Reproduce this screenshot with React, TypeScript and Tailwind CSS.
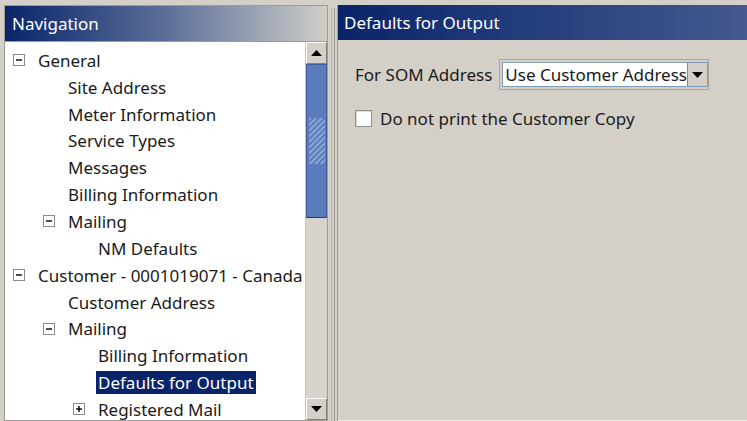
import React from 'react'

type Node = {
  label: string
  level: number
  expander?: 'minus' | 'plus'
  selected?: boolean
}

const nodes: Node[] = [
  { label: 'General', level: 0, expander: 'minus' },
  { label: 'Site Address', level: 1 },
  { label: 'Meter Information', level: 1 },
  { label: 'Service Types', level: 1 },
  { label: 'Messages', level: 1 },
  { label: 'Billing Information', level: 1 },
  { label: 'Mailing', level: 1, expander: 'minus' },
  { label: 'NM Defaults', level: 2 },
  { label: 'Customer - 0001019071 - Canada', level: 0, expander: 'minus' },
  { label: 'Customer Address', level: 1 },
  { label: 'Mailing', level: 1, expander: 'minus' },
  { label: 'Billing Information', level: 2 },
  { label: 'Defaults for Output', level: 2, selected: true },
  { label: 'Registered Mail', level: 2, expander: 'plus' },
]

const font = { fontFamily: '"Noto Sans", "Open Sans", sans-serif' }

function Expander({ kind }: { kind: 'minus' | 'plus' }) {
  return (
    <svg width="12" height="12" viewBox="0 0 12 12" className="shrink-0">
      <rect x="0.5" y="0.5" width="11" height="11" fill="#fff" stroke="#8a8a8a" />
      <path d="M3 6h6" stroke="#000" strokeWidth="1.4" />
      {kind === 'plus' && <path d="M6 3v6" stroke="#000" strokeWidth="1.4" />}
    </svg>
  )
}

function TreeRow({ node }: { node: Node }) {
  const indent = [0, 30, 60][node.level]
  return (
    <div className="flex h-[26.85px] items-center whitespace-nowrap" style={{ paddingLeft: indent }}>
      <div className="flex w-[31px] shrink-0 justify-start pl-[8px]">
        {node.expander && <Expander kind={node.expander} />}
      </div>
      <span
        className={
          node.selected
            ? 'bg-[#0a246a] px-[2px] py-[1px] text-white leading-[21px]'
            : 'px-[2px] py-[1px] text-[#1a1a1a] leading-[21px]'
        }
      >
        {node.label}
      </span>
    </div>
  )
}

function ArrowButton({ dir }: { dir: 'up' | 'down' }) {
  return (
    <div className="flex h-[22px] items-center justify-center border border-t-white border-l-white border-r-[#808080] border-b-[#808080] bg-[#d4d0c8]">
      <svg width="11" height="6" viewBox="0 0 11 6">
        {dir === 'up' ? <path d="M0 6L5.5 0L11 6z" fill="#000" /> : <path d="M0 0L5.5 6L11 0z" fill="#000" />}
      </svg>
    </div>
  )
}

function Scrollbar() {
  return (
    <div className="flex w-[22px] shrink-0 flex-col border-l border-[#c8c4bc] bg-[#d8d4cd]">
      <ArrowButton dir="up" />
      <div className="flex h-[154px] items-center justify-center border border-[#3f5f9f] border-b-[#1f3a78] bg-[#5a7cbc]">
        <svg width="16" height="46" viewBox="0 0 16 46">
          <defs>
            <pattern id="hatch" width="4" height="4" patternUnits="userSpaceOnUse" patternTransform="rotate(45)">
              <rect width="2" height="4" fill="#8ea6d6" />
            </pattern>
          </defs>
          <rect width="16" height="46" fill="url(#hatch)" />
        </svg>
      </div>
      <div className="flex-1" />
      <ArrowButton dir="down" />
    </div>
  )
}

export default function App() {
  return (
    <div className="flex h-[421px] w-[747px] overflow-hidden bg-[#d4d0c8] pt-[5px] text-[17px]" style={font}>
      {/* Navigation panel */}
      <div className="ml-[4px] flex w-[324px] shrink-0 flex-col border border-[#a09c94]">
        <div className="flex h-[35px] shrink-0 items-center bg-gradient-to-r from-[#0a246a] via-[#5d6f98] to-[#d0cec8] pl-[7px] text-white">
          Navigation
        </div>
        <div className="flex min-h-0 flex-1 border-t border-[#a09c94]">
          <div className="min-w-0 flex-1 overflow-hidden bg-white pt-[5px]">
            {nodes.map((n, i) => (
              <TreeRow key={i} node={n} />
            ))}
          </div>
          <Scrollbar />
        </div>
      </div>

      {/* splitter */}
      <div className="flex w-[9px] shrink-0 justify-center gap-[2px] pt-[3px]">
        <div className="w-px bg-[#b5b1a9]" />
        <div className="w-px bg-[#9d9991]" />
      </div>

      {/* Right panel */}
      <div className="flex min-w-0 flex-1 flex-col border-l border-[#a09c94]">
        <div className="flex h-[35px] shrink-0 items-center bg-gradient-to-r from-[#0a246a] to-[#43598f] pl-[6px] text-white">
          Defaults for Output
        </div>
        <div className="flex flex-1 flex-col gap-[16px] border-b border-[#eeeae4] pl-[17px] pt-[19px] text-[#1a1a1a]">
          <div className="flex items-center gap-[7px]">
            <span>For SOM Address</span>
            <div className="flex h-[31px] w-[210px] items-stretch border border-[#a8a59e] p-[2px]">
              <div className="flex flex-1 items-stretch border border-[#7f9db9] bg-white">
                <div className="flex flex-1 items-center overflow-hidden whitespace-nowrap pl-[2px]">Use Customer Address</div>
                <div className="flex w-[20px] items-center justify-center border-l border-[#8a8a8a] bg-[#d4d0c8]">
                  <svg width="11" height="6" viewBox="0 0 11 6">
                    <path d="M0 0L5.5 6L11 0z" fill="#000" />
                  </svg>
                </div>
              </div>
            </div>
          </div>
          <label className="flex items-center gap-[8px]">
            <span className="h-[17px] w-[17px] border border-[#8f8f8f] bg-white shadow-[inset_1px_1px_0_#dcdcdc]" />
            <span>Do not print the Customer Copy</span>
          </label>
        </div>
      </div>
    </div>
  )
}
